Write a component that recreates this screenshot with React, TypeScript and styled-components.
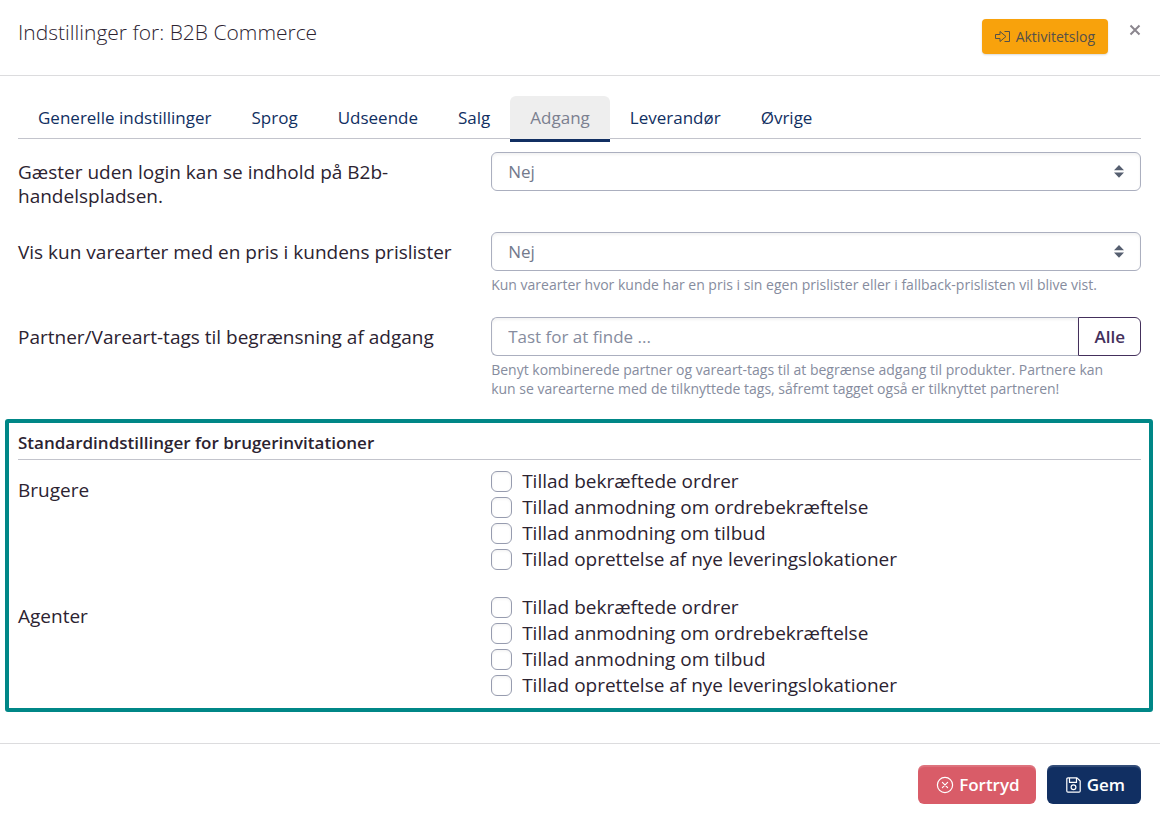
import React, { useId, useState } from "react";
import styled, { createGlobalStyle, css } from "styled-components";

const color = {
  ink: "#2c2331",
  navy: "#112f62",
  muted: "#868c9e",
  field: "#737a8c",
  border: "#abafbf",
  line: "#dcdcde",
  rule: "#c3c4cc",
  plum: "#44305c",
  teal: "#008787",
};

const GlobalStyle = createGlobalStyle`
  *, *::before, *::after { box-sizing: border-box; }
  body {
    margin: 0;
    background: #fff;
    color: ${color.ink};
    font: 400 19px/24px "Open Sans", "Noto Sans", sans-serif;
  }
  button, input, select { font-family: inherit; margin: 0; }
`;

const Dialog = styled.section`
  width: 100%;
`;

const Header = styled.header`
  display: flex;
  align-items: flex-start;
  padding: 19px 19px 21px 18px;
  border-bottom: 1px solid ${color.line};
`;

const Title = styled.h1`
  flex: 1;
  margin: 0;
  font-size: 21px;
  font-weight: 300;
  line-height: 26px;
`;

const LogButton = styled.button`
  display: flex;
  align-items: center;
  gap: 5px;
  height: 35px;
  padding: 0 13px 0 12px;
  border: 0;
  border-radius: 4px;
  background: #f8a20c;
  color: #555049;
  font-size: 14px;
  box-shadow: 0 1px 2px rgba(0, 0, 0, 0.15);
  cursor: pointer;
`;

const CloseButton = styled.button`
  display: flex;
  margin-left: 21px;
  padding: 5px 0;
  border: 0;
  background: none;
  color: #8b868e;
  cursor: pointer;
`;

const Body = styled.div`
  padding: 20px 19px 31px 18px;
`;

const Tabs = styled.nav`
  display: flex;
  height: 43px;
  margin-bottom: 13px;
  border-bottom: 1px solid ${color.rule};
`;

const Tab = styled.a<{ $active?: boolean }>`
  height: 46px;
  padding: 10px 20px;
  border-radius: 6px 6px 0 0;
  color: ${color.navy};
  font-size: 17px;
  text-decoration: none;
  white-space: nowrap;
  ${({ $active }) =>
    $active &&
    css`
      background: #eee;
      color: #7b8090;
      border-bottom: 3px solid ${color.navy};
    `}
`;

const Row = styled.div`
  display: grid;
  grid-template-columns: 5fr 7fr;
  column-gap: 9px;
  margin-bottom: 23px;
`;

const RowLabel = styled.label`
  padding: 8px 0 1px;
`;

const Help = styled.p`
  margin: 4px 0 0;
  padding-right: 16px;
  color: ${color.muted};
  font-size: 14px;
  line-height: 19px;
`;

const fieldBox = css`
  width: 100%;
  height: 39px;
  padding: 0 16px;
  border: 1px solid ${color.border};
  border-radius: 6px;
  background: #fff;
  box-shadow: inset 0 2px 3px rgba(0, 0, 0, 0.05);
  font-size: 17px;
  line-height: 24px;
`;

const SelectWrap = styled.div`
  display: grid;
  align-items: center;
  > * { grid-area: 1 / 1; }
  > svg { justify-self: end; margin-right: 17px; pointer-events: none; }
`;

const Select = styled.select`
  ${fieldBox}
  appearance: none;
  color: ${color.field};
`;

const InputGroup = styled.div`
  display: flex;
`;

const TextInput = styled.input`
  ${fieldBox}
  flex: 1;
  min-width: 0;
  border-right: 0;
  border-radius: 6px 0 0 6px;
  color: ${color.field};
  &::placeholder { color: ${color.muted}; opacity: 1; }
`;

const AllButton = styled.button`
  height: 39px;
  padding: 0 15px;
  border: 1px solid ${color.plum};
  border-radius: 0 6px 6px 0;
  background: #fff;
  color: ${color.plum};
  font-size: 17px;
  font-weight: 600;
  cursor: pointer;
`;

const Highlight = styled.section`
  margin: -2px -12px 0 -13px;
  padding: 8px 8px 10px 9px;
  border: 4px solid ${color.teal};
  border-radius: 3px;
`;

const SectionTitle = styled.h2`
  margin: 0 0 8px;
  padding-bottom: 4px;
  border-bottom: 1px solid ${color.rule};
  font-size: 17px;
  font-weight: 600;
  line-height: 24px;
`;

const CheckGroup = styled.fieldset`
  display: grid;
  grid-template-columns: 5fr 7fr;
  column-gap: 9px;
  margin: 0;
  padding: 0;
  border: 0;
  & + & { margin-top: 22px; }
`;

const GroupName = styled.div`
  padding-top: 10px;
`;

const CheckLabel = styled.label`
  display: flex;
  align-items: center;
  gap: 10px;
  height: 26px;
`;

const Checkbox = styled.input`
  appearance: none;
  width: 21px;
  height: 21px;
  border: 1px solid #979caf;
  border-radius: 6px;
  background: #fff;
  box-shadow: inset 0 1px 3px rgba(0, 0, 0, 0.06);
  &:checked { background: ${color.navy}; }
`;

const Footer = styled.footer`
  display: flex;
  justify-content: flex-end;
  gap: 11px;
  padding: 21px 19px 17px;
  border-top: 1px solid ${color.line};
`;

const ActionButton = styled.button<{ $tone: string }>`
  display: flex;
  align-items: center;
  gap: 5px;
  height: 39px;
  padding: 0 16px 0 18px;
  border: 0;
  border-radius: 6px;
  background: ${({ $tone }) => $tone};
  color: #fff;
  font-size: 17px;
  font-weight: 600;
  box-shadow: inset 0 2px 1px rgba(255, 255, 255, 0.15);
  cursor: pointer;
`;

const EnterIcon = () => (
  <svg width="17" height="14" viewBox="0 0 17 14" fill="none" stroke="currentColor" strokeLinejoin="round" aria-hidden="true">
    <path d="M1.5 4.5H6V1.5L12 6.5L6 11.5V8.5H1.5ZM10.5 1.5H15.5V11.5H10.5" />
  </svg>
);

const CancelIcon = () => (
  <svg width="18" height="18" viewBox="0 0 18 18" fill="none" stroke="currentColor" strokeWidth="1.2" strokeLinecap="round" aria-hidden="true">
    <circle cx="9" cy="9" r="7.6" />
    <path d="M6.4 6.4L11.6 11.6M11.6 6.4L6.4 11.6" />
  </svg>
);

const SaveIcon = () => (
  <svg width="17" height="18" viewBox="0 0 17 18" fill="none" stroke="currentColor" strokeWidth="1.2" strokeLinejoin="round" aria-hidden="true">
    <path d="M3 1.9H12L15.2 5V15Q15.2 16.1 14 16.1H3Q1.8 16.1 1.8 15V3Q1.8 1.9 3 1.9Z" />
    <path d="M4.5 2V6.4H11.5V2" />
    <circle cx="8.5" cy="11.2" r="2.4" />
  </svg>
);

const CloseIcon = () => (
  <svg width="12" height="12" viewBox="0 0 12 12" stroke="currentColor" strokeWidth="2" aria-hidden="true">
    <path d="M1.5 1.5L10.5 10.5M10.5 1.5L1.5 10.5" />
  </svg>
);

const SortIcon = () => (
  <svg width="10" height="13" viewBox="0 0 10 13" fill="#565f70" aria-hidden="true">
    <path d="M0 5.2L5 0L10 5.2ZM0 7.6H10L5 12.8Z" />
  </svg>
);

const tabs = ["Generelle indstillinger", "Sprog", "Udseende", "Salg", "Adgang", "Leverandør", "Øvrige"];
const permissions = [
  "Tillad bekræftede ordrer",
  "Tillad anmodning om ordrebekræftelse",
  "Tillad anmodning om tilbud",
  "Tillad oprettelse af nye leveringslokationer",
];

function SelectRow({ label, help }: { label: string; help?: string }) {
  const id = useId();
  return (
    <Row>
      <RowLabel htmlFor={id}>{label}</RowLabel>
      <div>
        <SelectWrap>
          <Select id={id} defaultValue="Nej">
            <option>Nej</option>
            <option>Ja</option>
          </Select>
          <SortIcon />
        </SelectWrap>
        {help && <Help>{help}</Help>}
      </div>
    </Row>
  );
}

function Permissions({ name }: { name: string }) {
  const id = useId();
  return (
    <CheckGroup aria-labelledby={id}>
      <GroupName id={id}>{name}</GroupName>
      <div>
        {permissions.map((text) => (
          <CheckLabel key={text}>
            <Checkbox type="checkbox" />
            {text}
          </CheckLabel>
        ))}
      </div>
    </CheckGroup>
  );
}

export default function App() {
  const [active, setActive] = useState("Adgang");
  return (
    <>
      <GlobalStyle />
      <Dialog>
        <Header>
          <Title>Indstillinger for: B2B Commerce</Title>
          <LogButton type="button">
            <EnterIcon />
            Aktivitetslog
          </LogButton>
          <CloseButton type="button" aria-label="Luk">
            <CloseIcon />
          </CloseButton>
        </Header>
        <Body>
          <Tabs>
            {tabs.map((tab) => (
              <Tab key={tab} href="#" $active={tab === active} onClick={() => setActive(tab)}>
                {tab}
              </Tab>
            ))}
          </Tabs>
          <SelectRow label="Gæster uden login kan se indhold på B2b-handelspladsen." />
          <SelectRow
            label="Vis kun varearter med en pris i kundens prislister"
            help="Kun varearter hvor kunde har en pris i sin egen prislister eller i fallback-prislisten vil blive vist."
          />
          <Row>
            <RowLabel htmlFor="tags">Partner/Vareart-tags til begrænsning af adgang</RowLabel>
            <div>
              <InputGroup>
                <TextInput id="tags" type="text" placeholder="Tast for at finde ..." />
                <AllButton type="button">Alle</AllButton>
              </InputGroup>
              <Help>
                Benyt kombinerede partner og vareart-tags til at begrænse adgang til produkter. Partnere kan kun se
                varearterne med de tilknyttede tags, såfremt tagget også er tilknyttet partneren!
              </Help>
            </div>
          </Row>
          <Highlight>
            <SectionTitle>Standardindstillinger for brugerinvitationer</SectionTitle>
            <Permissions name="Brugere" />
            <Permissions name="Agenter" />
          </Highlight>
        </Body>
        <Footer>
          <ActionButton type="button" $tone="#d95c68">
            <CancelIcon />
            Fortryd
          </ActionButton>
          <ActionButton type="button" $tone={color.navy}>
            <SaveIcon />
            Gem
          </ActionButton>
        </Footer>
      </Dialog>
    </>
  );
}
